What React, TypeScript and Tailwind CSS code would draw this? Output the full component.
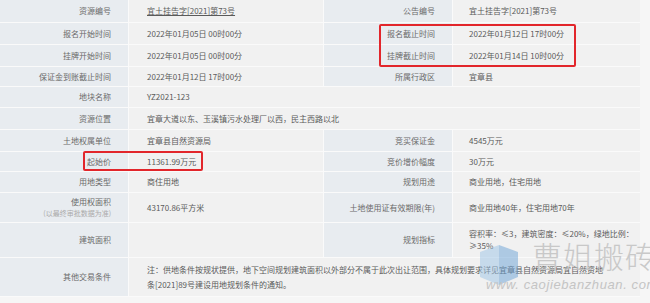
import React from "react";

const F = "font-['Noto_Sans_CJK_SC','Microsoft_YaHei',sans-serif]";

function L({ children, extra = "" }: { children: React.ReactNode; extra?: string }) {
  return (
    <div className={`flex items-center justify-end pr-[17px] bg-[#e8ecf0] text-[#6a6a6a] ${extra}`}>
      {children}
    </div>
  );
}
function V({ children, extra = "", pl = "pl-[18px]" }: { children?: React.ReactNode; extra?: string; pl?: string }) {
  return (
    <div className={`flex items-center ${pl} bg-[#f1f1f1] text-[#5a5a5a] ${extra}`}>{children}</div>
  );
}

export default function App() {
  return (
    <div className={`relative w-[650px] h-[303px] overflow-hidden bg-[#f6f6f6] ${F} text-[8px] leading-[10px]`}>
      <div className="grid w-[640px] grid-cols-[128px_194px_128px_187px] grid-rows-[22px_21px_21px_19px_20px_21px_21px_19px_20px_29px_34px_38px] gap-px bg-[#fafafa] pb-px">
        <L>资源编号</L>
        <V><span className="underline">宜土挂告字[2021]第73号</span></V>
        <L>公告编号</L>
        <V pl="pl-[16px]">宜土挂告字[2021]第73号</V>

        <L>报名开始时间</L>
        <V>2022年01月05日 00时00分</V>
        <L>报名截止时间</L>
        <V pl="pl-[16px]">2022年01月12日 17时00分</V>

        <L>挂牌开始时间</L>
        <V>2022年01月05日 00时00分</V>
        <L>挂牌截止时间</L>
        <V pl="pl-[16px]">2022年01月14日 10时00分</V>

        <L>保证金到账截止时间</L>
        <V>2022年01月12日 17时00分</V>
        <L>所属行政区</L>
        <V pl="pl-[16px]">宜章县</V>

        <L>地块名称</L>
        <V extra="col-span-3">YZ2021-123</V>

        <L>资源位置</L>
        <V extra="col-span-3">宜章大道以东、玉溪镇污水处理厂以西，民主西路以北</V>

        <L>土地权属单位</L>
        <V>宜章县自然资源局</V>
        <L>竞买保证金</L>
        <V pl="pl-[16px]">4545万元</V>

        <L>起始价</L>
        <V>11361.99万元</V>
        <L>竞价增价幅度</L>
        <V pl="pl-[16px]">30万元</V>

        <L>用地类型</L>
        <V>商住用地</V>
        <L>规划用途</L>
        <V pl="pl-[16px]">商业用地，住宅用地</V>

        <div className="flex flex-col items-end justify-center pr-[17px] bg-[#e8ecf0]">
          <span className="text-[#6a6a6a]">使用权面积</span>
          <span className="text-[#aaa] text-[7px] leading-[10px] mt-[1px]">(以最终审批数据为准)</span>
        </div>
        <V>43170.86平方米</V>
        <L>土地使用证有效期限(年)</L>
        <V pl="pl-[16px]">商业用地40年，住宅用地70年</V>

        <L>建筑面积</L>
        <V />
        <L>规划指标</L>
        <V pl="pl-[16px]" extra="leading-[12px]">
          <span>
            容积率：≤3，建筑密度：≤20%，绿地比例：
            <br />
            ≥35%
          </span>
        </V>

        <L>其他交易条件</L>
        <V extra="col-span-3 leading-[15px]">
          <span>
            注：供地条件按规状提供，地下空间规划建筑面积以外部分不属于此次出让范围，具体规划要求详见宜章县自然资源局宜自然资地
            <br />
            条[2021]89号建设用地规划条件的通知。
          </span>
        </V>
      </div>

      {/* red highlight boxes */}
      <div className="absolute left-[379px] top-[24px] w-[197px] h-[43px] border-2 border-[#e2262b] rounded-[2px]" />
      <div className="absolute left-[83px] top-[151px] w-[120px] h-[20px] border-2 border-[#e2262b] rounded-[2px]" />

      {/* watermark */}
      <svg className="absolute left-[478px] top-[244px]" width="42" height="42" viewBox="0 0 42 42">
        <polygon points="2,8 21,1 21,41 2,33" fill="#9cc3e6" opacity="0.5" />
        <polygon points="21,1 40,8 40,33 21,41" fill="#6aa2d6" opacity="0.5" />
      </svg>
      <div className="absolute left-[532px] top-[236px] text-[30px] leading-[38px] tracking-[1px] text-[#c2c2c2] opacity-85 font-['Noto_Sans_CJK_SC',sans-serif] font-light whitespace-nowrap">
        曹姐搬砖
      </div>
      <div className="absolute left-[486px] top-[277px] text-[13px] leading-[16px] italic tracking-[0.6px] text-[#c4c4c4] font-['Liberation_Sans',sans-serif] whitespace-nowrap">
        www. caojiebanzhuan. com
      </div>
    </div>
  );
}
